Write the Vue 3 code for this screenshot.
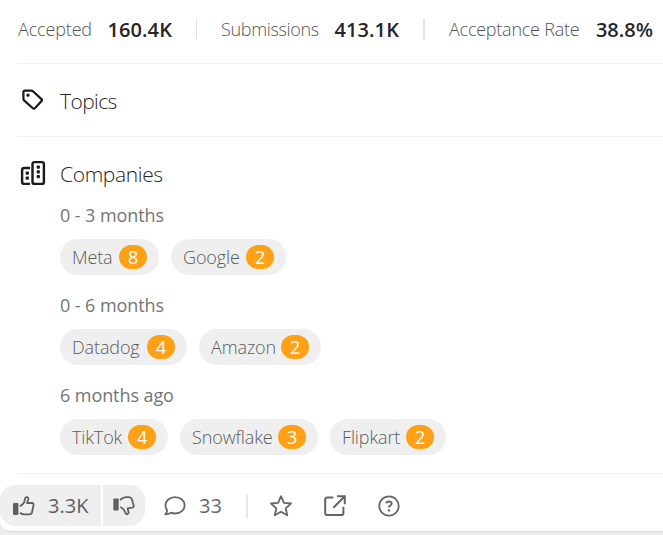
<script setup>
const stats = [
  { label: 'Accepted', value: '160.4K', key: 'accepted' },
  { label: 'Submissions', value: '413.1K', key: 'submissions' },
  { label: 'Acceptance Rate', value: '38.8%', key: 'rate' },
]
const groups = [
  { period: '0 - 3 months', companies: [{ name: 'Meta', count: 8, width: 99 }, { name: 'Google', count: 2, width: 115 }] },
  { period: '0 - 6 months', companies: [{ name: 'Datadog', count: 4, width: 127 }, { name: 'Amazon', count: 2, width: 122 }] },
  { period: '6 months ago', companies: [{ name: 'TikTok', count: 4, width: 108 }, { name: 'Snowflake', count: 3, width: 138 }, { name: 'Flipkart', count: 2, width: 116 }] },
]
</script>

<template>
  <main class="panel">
    <section class="stats">
      <div v-for="s in stats" :key="s.key" class="stat" :class="s.key">
        <span class="label">{{ s.label }}</span>
        <span class="value">{{ s.value }}</span>
      </div>
    </section>

    <section class="topics heading">
      <svg width="24" height="24" viewBox="0 0 24 24" fill="none" stroke="currentColor" stroke-width="2.2" stroke-linejoin="round">
        <path d="M2.4 4.3 Q2.4 2.7 4 2.7 H10.4 Q11.4 2.7 12.2 3.5 L20.5 11.1 Q21.5 12.1 20.5 13.1 L13.9 20.3 Q12.9 21.3 11.9 20.3 L3.3 12.6 Q2.4 11.7 2.4 10.7 Z" />
        <circle cx="7" cy="7.2" r="1.6" fill="currentColor" stroke="none" />
      </svg>
      <h2>Topics</h2>
    </section>

    <section class="companies">
      <div class="heading">
        <svg class="buildings" width="26" height="26" viewBox="0 0 26 26" fill="none" stroke="currentColor" stroke-width="2.4">
          <rect x="12.5" y="2.1" width="11.4" height="21.8" rx="2" />
          <path d="M10 8H4.3Q2.1 8 2.1 10.2V21.7Q2.1 23.9 4.3 23.9H10" />
          <g fill="currentColor" stroke="none">
            <rect x="16.7" y="5.5" width="3.2" height="3.2" rx=".8" /><rect x="16.7" y="10.3" width="3.2" height="3.2" rx=".8" /><rect x="16.7" y="15.1" width="3.2" height="3.2" rx=".8" />
            <rect x="5.7" y="11.5" width="3.2" height="3.2" rx=".8" /><rect x="5.7" y="16.5" width="3.2" height="3.2" rx=".8" />
          </g>
        </svg>
        <h2>Companies</h2>
      </div>
      <div v-for="g in groups" :key="g.period" class="group">
        <h3>{{ g.period }}</h3>
        <div class="chips">
          <div v-for="c in g.companies" :key="c.name" class="chip" :style="{ width: c.width + 'px' }">
            <span>{{ c.name }}</span><b>{{ c.count }}</b>
          </div>
        </div>
      </div>
    </section>

    <footer class="actions">
      <button class="vote up">
        <svg width="24" height="24" viewBox="0 0 24 24" fill="none" stroke="currentColor" stroke-width="1.8" stroke-linejoin="round">
          <rect x="1" y="9" width="5.4" height="12" rx="1" fill="currentColor" stroke="none" />
          <path d="M8 12.2L11.2 9.8Q12.3 8.7 12.7 6.2L13.2 4.3Q13.6 2.9 15 3.2Q16.7 3.7 16.3 5.5L15 9H19.8Q22 9 21.5 11.1L20 18.3Q19.5 20.4 17.5 20.4H12Q10 20.4 8 18.7" />
        </svg>
        <span>3.3K</span>
      </button>
      <button class="vote down">
        <svg width="24" height="24" viewBox="0 0 24 24" fill="none" stroke="currentColor" stroke-width="1.8" stroke-linejoin="round">
          <rect x="1.3" y="4.6" width="5.4" height="12" rx="1" fill="currentColor" stroke="none" />
          <path d="M8 6Q10.5 3.5 14 3.2H17Q19 3.2 19.8 5.2L21.6 10.9Q22.3 13.2 20.2 13.6L15.5 14.3L16.6 18.2Q16.8 19.8 15.2 20.2Q14.3 20.4 13.7 19.3L12.2 16.3Q11.3 14.5 8.3 13" />
        </svg>
      </button>
      <div class="comments">
        <svg width="24" height="24" viewBox="0 0 24 24" fill="none" stroke="currentColor" stroke-width="1.8" stroke-linejoin="round">
          <path d="M12.1 3.1C17.6 3.1 21.6 6.7 21.6 11.3S17.6 19.5 12.1 19.5Q9.8 19.5 7.8 18.6Q5.4 20.6 2.3 20.4Q4.1 18.3 4.1 16.2Q2.5 14.1 2.5 11.3C2.5 6.7 6.6 3.1 12.1 3.1Z" />
        </svg>
        <span>33</span>
      </div>
      <i class="rule"></i>
      <svg width="24" height="24" viewBox="0 0 24 24" fill="none" stroke="currentColor" stroke-width="1.8" stroke-linejoin="round">
        <path d="M12 2.2L14.9 8.8L22 9.5L16.7 14.3L18.2 21.3L12 17.7L5.8 21.3L7.3 14.3L2 9.5L9.1 8.8Z" />
      </svg>
      <svg width="24" height="24" viewBox="0 0 24 24" fill="none" stroke="currentColor" stroke-width="2">
        <path d="M10.3 3.4H4.3Q2.2 3.4 2.2 5.5V19Q2.2 21.1 4.3 21.1H18.3Q20.4 21.1 20.4 19V12.7M14 2.3H21.8V10.2M21.3 2.8L10.3 13.8" />
      </svg>
      <svg width="24" height="24" viewBox="0 0 24 24" fill="none" stroke="currentColor" stroke-width="1.8">
        <circle cx="12" cy="12" r="9.7" />
        <path d="M9.3 9.3Q9.5 7.6 12 7.6Q14.6 7.6 14.6 9.6Q14.6 11 13.2 11.6Q12 12.1 12 13.5" stroke-width="2" /><circle cx="12" cy="16.4" r="1.2" fill="currentColor" stroke="none" />
      </svg>
    </footer>
  </main>
</template>

<style>
body { margin: 0; background: #ededed; overflow: hidden; }
</style>

<style scoped>
* { box-sizing: border-box; }
.panel { height: 532px; background: #fff; border-bottom: 1px solid #d9d9d9; border-bottom-left-radius: 10px; font-family: "Open Sans", "Noto Sans", sans-serif; color: #262626; white-space: nowrap; }
.stats { height: 64px; margin-left: 18px; border-bottom: 1px solid #f0f0f0; display: flex; padding-top: 18px; }
.stat { flex: none; height: 21px; display: flex; align-items: center; justify-content: space-between; line-height: 21px; }
.stat .label { font-size: 18px; font-weight: 320; color: #555; letter-spacing: -.15px; padding-top: 1px; }
.stat .value { font-size: 20px; font-weight: 580; letter-spacing: .1px; padding-top: 2px; }
.accepted { width: 154px; }
.submissions { width: 203px; margin-left: 24px; border-left: 1px solid #e2e2e2; padding-left: 24px; }
.submissions .label { letter-spacing: -.33px; }
.rate { width: 230px; margin-left: 24px; border-left: 2px solid #e4e4e4; padding-left: 24px; }
.rate .label { letter-spacing: -.24px; }
.rate .value { letter-spacing: 0; }
.heading { display: flex; align-items: center; gap: 14px; }
.topics { height: 73px; margin-left: 18px; padding-left: 3px; border-bottom: 1px solid #f0f0f0; gap: 15px; }
.topics h2 { padding-top: 2px; letter-spacing: -.6px; }
.heading svg { color: #1a1a1a; }
h2, h3 { margin: 0; }
h2 { font-size: 21px; font-weight: 360; line-height: 30px; letter-spacing: -.36px; }
.companies { height: 337px; margin-left: 18px; padding: 22px 0 0 2px; border-bottom: 1px solid #f0f0f0; }
.companies .heading { height: 30px; }
.buildings { margin-top: -2px; }
.group { height: 90px; margin-left: 40px; padding-top: 13px; }
h3 { font-size: 18px; line-height: 26px; font-weight: 500; color: #757575; letter-spacing: -.08px; }
.chips { display: flex; gap: 12px; margin-top: 11px; }
.chip { height: 36px; border-radius: 18px; background: #efefef; padding: 0 12px; display: flex; align-items: center; justify-content: space-between; font-size: 18px; font-weight: 320; color: #5c5c5c; letter-spacing: -.12px; }
.chip b { width: 28px; height: 24px; border-radius: 12px; background: #ffa116; color: #fff; line-height: 25px; font-weight: 450; text-align: center; }
.actions { height: 52px; padding-top: 11px; display: flex; align-items: flex-start; color: #666; font-size: 20px; }
.vote { height: 41px; border: 0; background: #efefef; color: #5f5f5f; display: flex; align-items: center; padding: 0; font: inherit; }
.up { width: 101px; border-radius: 15px 0 0 15px; padding-left: 12px; gap: 12px; }
.down { width: 42px; margin-left: 2px; border-radius: 0 15px 15px 0; padding-left: 9px; }
.comments { height: 41px; margin-left: 18px; width: 84px; display: flex; align-items: center; gap: 12px; }
.rule { width: 2px; height: 24px; margin: 9px 21px 0 -1px; background: #e8e8e8; }
.actions > svg { margin: 9px 30px 0 0; }
</style>
